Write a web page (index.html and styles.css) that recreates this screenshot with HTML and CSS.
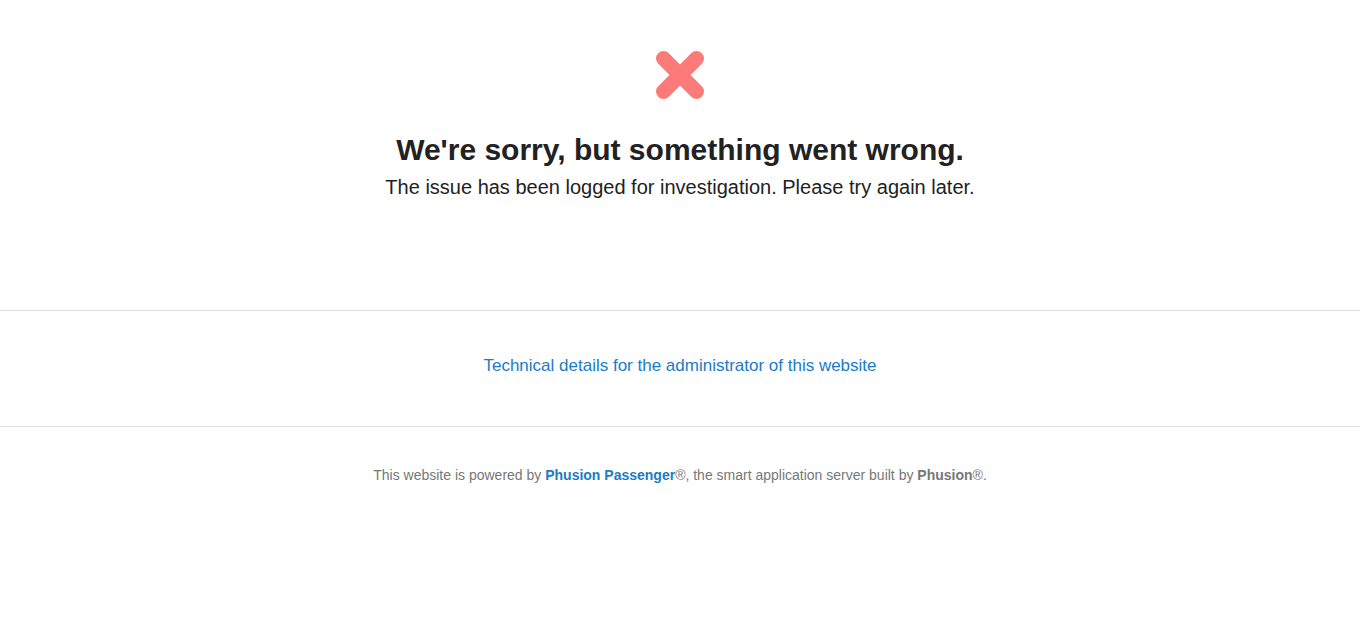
FILE: index.html
```html
<!DOCTYPE html>
<html lang="en">
<head>
    <meta charset="UTF-8">
    <title>We're sorry, but something went wrong</title>
    <link rel="stylesheet" href="styles.css">
</head>
<body>
    <div class="container">
        <div class="error">
            <svg class="icon" width="52" height="52" viewBox="0 0 52 52">
                <path d="M9.5 9.5 L42.5 42.5 M42.5 9.5 L9.5 42.5" stroke="#fc7b79" stroke-width="15" stroke-linecap="round"/>
            </svg>
            <h1>We're sorry, but something went wrong.</h1>
            <p class="lead">The issue has been logged for investigation. Please try again later.</p>
        </div>
    </div>

    <div class="details">
        <a href="#">Technical details for the administrator of this website</a>
    </div>

    <div class="footer">
        This website is powered by <a href="#"><b>Phusion Passenger</b></a>&reg;, the smart application server built by <b>Phusion</b>&reg;.
    </div>
</body>
</html>
```

FILE: styles.css
```css
*{
    margin: 0;
    padding: 0;
}
body{
    font-family: "Liberation Sans", Arial, sans-serif;
    font-size: 14px;
    color: #222;
    background: #fff;
}
.container{
    text-align: center;
    padding-top: 49px;
    height: 261px;
    border-bottom: 1px solid #ddd;
}
.icon{
    display: block;
    margin: 0 auto;
}
.error h1{
    font-size: 30px;
    font-weight: bold;
    color: #222;
    margin-top: 31px;
    line-height: 36px;
}
.lead{
    font-size: 20px;
    line-height: 26px;
    margin-top: 6px;
}
.details{
    text-align: center;
    height: 115px;
    line-height: 110px;
    border-bottom: 1px solid #ddd;
    font-size: 17px;
}
.details a{
    color: #1b7bc6;
    text-decoration: none;
}
.footer{
    text-align: center;
    color: #777;
    font-size: 14px;
    padding-top: 40px;
}
.footer a{
    color: #1b7bc6;
    text-decoration: none;
}
.footer b{
    font-weight: bold;
}
```
